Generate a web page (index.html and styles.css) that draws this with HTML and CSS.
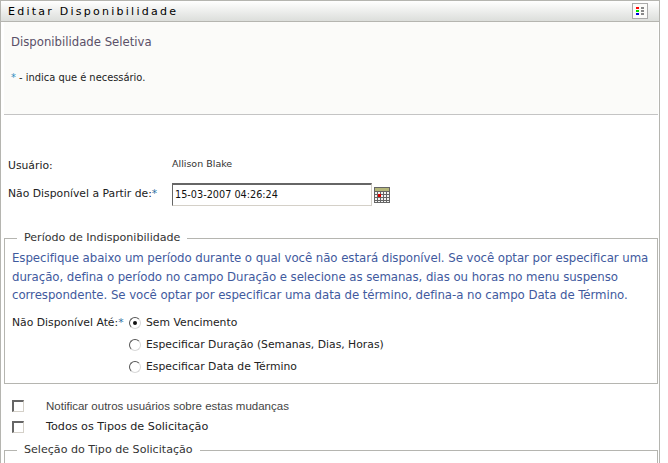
FILE: index.html
```html
<!DOCTYPE html>
<html lang="pt">
<head>
<meta charset="utf-8">
<title>Editar Disponibilidade</title>
<link rel="stylesheet" href="styles.css">
</head>
<body>
<div class="panel">
  <header class="titlebar">
    <h1 class="title">Editar Disponibilidade</h1>
    <span class="legend-btn">
      <svg width="16" height="16" viewBox="0 0 16 16">
        <rect x="0.5" y="0.5" width="15" height="15" fill="#fbfbf9" stroke="#aaaaaa"/>
        <rect x="4" y="4" width="3" height="2" fill="#ff0000"/>
        <rect x="4" y="7" width="3" height="2" fill="#00e000"/>
        <rect x="4" y="10" width="3" height="2" fill="#0000e0"/>
        <rect x="9" y="4" width="3" height="2" fill="#888888"/>
        <rect x="9" y="7" width="3" height="2" fill="#888888"/>
        <rect x="9" y="10" width="3" height="2" fill="#888888"/>
      </svg>
    </span>
  </header>
  <section class="intro">
    <h2 class="subtitle">Disponibilidade Seletiva</h2>
    <p class="required-note"><span class="star">*</span> - indica que é necessário.</p>
  </section>
  <div class="form-rows">
    <div class="row row-user">
      <span class="label">Usuário:</span>
      <span class="value">Allison Blake</span>
    </div>
    <div class="row row-date">
      <label class="label">Não Disponível a Partir de:<span class="star-plain">*</span></label>
      <span class="date-input">15-03-2007 04:26:24</span>
      <svg class="cal" width="16" height="16" viewBox="0 0 16 16">
        <rect width="16" height="16" fill="#666666"/>
        <rect x="1" y="1" width="14" height="3" fill="#b5b77a"/>
        <g fill="#f4f4f4">
          <rect x="1" y="5" width="2" height="2"/><rect x="4" y="5" width="2" height="2"/><rect x="7" y="5" width="2" height="2"/><rect x="10" y="5" width="2" height="2"/><rect x="13" y="5" width="2" height="2"/>
          <rect x="1" y="8" width="2" height="2"/><rect x="4" y="8" width="2" height="2"/><rect x="7" y="8" width="2" height="2"/><rect x="10" y="8" width="2" height="2"/><rect x="13" y="8" width="2" height="2"/>
          <rect x="1" y="11" width="2" height="2"/><rect x="4" y="11" width="2" height="2"/><rect x="7" y="11" width="2" height="2"/><rect x="10" y="11" width="2" height="2"/><rect x="13" y="11" width="2" height="2"/>
          <rect x="1" y="14" width="2" height="1"/><rect x="4" y="14" width="2" height="1"/><rect x="7" y="14" width="2" height="1"/><rect x="10" y="14" width="2" height="1"/><rect x="13" y="14" width="2" height="1"/>
        </g>
        <rect x="4" y="7" width="3" height="3" fill="#e00000"/>
      </svg>
    </div>
  </div>
  <fieldset class="group group-period">
    <legend class="group-title">Período de Indisponibilidade</legend>
    <p class="help">Especifique abaixo um período durante o qual você não estará disponível. Se você optar por especificar uma duração, defina o período no campo Duração e selecione as semanas, dias ou horas no menu suspenso correspondente. Se você optar por especificar uma data de término, defina-a no campo Data de Término.</p>
    <div class="until">
      <span class="until-label">Não Disponível Até:<span class="star-plain">*</span></span>
      <div class="options">
        <div class="option"><span class="radio checked"></span>Sem Vencimento</div>
        <div class="option"><span class="radio"></span>Especificar Duração (Semanas, Dias, Horas)</div>
        <div class="option"><span class="radio"></span>Especificar Data de Término</div>
      </div>
    </div>
  </fieldset>
  <div class="checks">
    <div class="check check-notify"><span class="box"></span><span class="notify-text">Notificar outros usuários sobre estas mudanças</span></div>
    <div class="check"><span class="box"></span><span>Todos os Tipos de Solicitação</span></div>
  </div>
  <fieldset class="group group-type">
    <legend class="group-title">Seleção do Tipo de Solicitação</legend>
  </fieldset>
</div>
</body>
</html>
```
FILE: styles.css
```css
html, body {
  margin: 0;
  padding: 0;
  height: 463px;
  overflow: hidden;
  background: #ffffff;
}
body {
  font-family: "DejaVu Sans", Verdana, sans-serif;
  font-size: 10.8px;
  color: #222222;
}
.panel {
  width: 660px;
  height: 480px;
  box-sizing: border-box;
  border: 1px solid #b5b5b0;
  border-bottom: 0;
  overflow: hidden;
}
.titlebar {
  height: 20px;
  display: flex;
  align-items: center;
  justify-content: space-between;
  padding: 0 11px 0 7px;
  background: linear-gradient(#ffffff, #dcdedb);
  border-bottom: 1px solid #b5b5b0;
}
.title {
  margin: 0;
  font-size: 11px;
  font-weight: normal;
  letter-spacing: 2.25px;
  color: #000000;
}
.legend-btn {
  display: flex;
}
.intro {
  height: 93px;
  margin: 0 1px 0 3px;
  box-sizing: border-box;
  padding: 13px 0 0 7px;
  background: #fbfbf9;
  border-bottom: 1px solid #c4c4c4;
}
.subtitle {
  margin: 0;
  font-size: 11.7px;
  font-weight: normal;
  line-height: 14px;
  color: #5a5068;
}
.required-note {
  margin: 22px 0 0;
  line-height: 14px;
  font-size: 9.9px;
  color: #222222;
}
.star {
  color: #2f8fc0;
}
.form-rows {
  padding: 41px 0 0 7px;
}
.row {
  display: flex;
  align-items: flex-start;
}
.label {
  width: 164px;
  flex: none;
  line-height: 14px;
  color: #222222;
}
.row-user .label {
  margin-top: 3px;
}
.value {
  font-size: 9.5px;
  line-height: 14px;
  margin-top: 1px;
  color: #333333;
}
.row-date {
  margin-top: 10px;
}
.row-date .label {
  margin-top: 4px;
}
.star-plain {
  color: #2f6f9f;
}
.date-input {
  box-sizing: border-box;
  width: 200px;
  height: 23px;
  line-height: 20px;
  padding-left: 2px;
  font-size: 9.7px;
  border-style: solid;
  border-color: #666666 #d4d0c8 #d4d0c8 #666666;
  border-width: 2px 1px 1px 1px;
  background: #ffffff;
  color: #111111;
}
.cal {
  margin: 4px 0 0 2px;
}
.group {
  margin: 0 1px 0 3px;
  padding: 0 0 0 7px;
  border: 1px solid #b5b5b0;
  min-width: 0;
}
.group-period {
  margin-top: 25px;
  height: 153px;
  box-sizing: border-box;
}
.group-title {
  margin-left: 5px;
  padding: 0 7px;
  font-size: 11.1px;
  line-height: 14px;
  color: #333333;
}
.help {
  margin: 4px 0 0;
  font-size: 11.77px;
  letter-spacing: -0.06px;
  line-height: 18.5px;
  color: #3f5a9e;
}
.until {
  display: flex;
  margin-top: 8px;
}
.until-label {
  width: 117px;
  flex: none;
  line-height: 14px;
  margin-top: 3px;
}
.options {
  display: flex;
  flex-direction: column;
  gap: 2px;
}
.option {
  display: flex;
  align-items: center;
  height: 20px;
  gap: 5px;
}
.radio {
  box-sizing: border-box;
  width: 12px;
  height: 12px;
  border-radius: 50%;
  border: 1px solid;
  border-color: #555555 #d8d8d8 #d8d8d8 #555555;
  background: #ffffff;
  position: relative;
}
.radio.checked::after {
  content: "";
  position: absolute;
  left: 3px;
  top: 3px;
  width: 4px;
  height: 4px;
  border-radius: 50%;
  background: #111111;
}
.checks {
  padding: 11px 0 0 11px;
}
.check {
  display: flex;
  align-items: center;
  height: 21px;
  font-size: 11.2px;
}
.box {
  box-sizing: border-box;
  width: 12px;
  height: 12px;
  margin-right: 22px;
  border-style: solid;
  border-width: 2px 1px 1px 2px;
  border-color: #666666 #d4d0c8 #d4d0c8 #666666;
  background: #ffffff;
}
.notify-text {
  font-family: "Liberation Sans", Arial, sans-serif;
  font-size: 11.5px;
  color: #444444;
}
.group-type {
  margin-top: 6px;
  height: 40px;
}
```
